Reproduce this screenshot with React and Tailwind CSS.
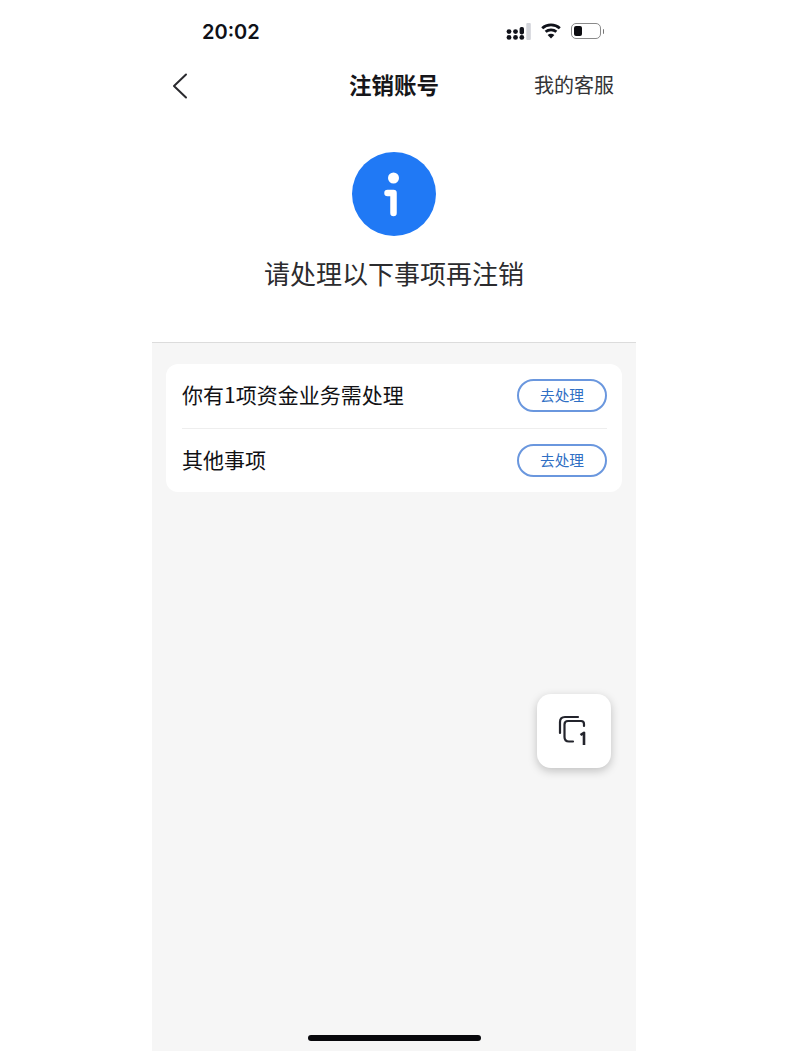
const CJK = "font-['Noto_Sans_CJK_SC','Noto_Sans',sans-serif]";

function StatusIcons() {
  return (
    <div className="flex -translate-y-px items-center gap-[10px]">
      <svg width="25" height="17" viewBox="0 0 25 17">
        <g fill="#10121a">
          <circle cx="3" cy="8.6" r="2.4" /><circle cx="3" cy="14.4" r="2.4" />
          <circle cx="9.5" cy="8.6" r="2.4" /><circle cx="9.5" cy="14.4" r="2.4" />
          <rect x="13.6" y="4" width="4.4" height="7.4" rx="1.8" /><circle cx="15.8" cy="14.4" r="2.4" />
        </g>
        <rect x="20.3" y="0" width="4.5" height="17" rx="1" fill="#d2d4da" />
      </svg>
      <svg width="20" height="16" viewBox="0 0 20 16" fill="none" stroke="#10121a" strokeWidth="2.8">
        <path d="M1.2 5.2 C6 0.8 14 0.8 18.8 5.2" />
        <path d="M4.6 8.8 C7.6 6.2 12.4 6.2 15.4 8.8" />
        <path d="M10 15.6 L6.6 11.9 C8.6 10.4 11.4 10.4 13.4 11.9 Z" fill="#10121a" stroke="none" />
      </svg>
      <div className="flex items-center gap-[1.5px]">
        <div className="flex h-[16px] w-[30px] items-center rounded-[5px] border border-[#8a8a8a] p-[2px]">
          <div className="h-full w-[8px] rounded-[2px] bg-[#0c0c10]" />
        </div>
        <div className="h-[5px] w-[1.5px] rounded-r bg-[#777]" />
      </div>
    </div>
  );
}

function Button() {
  return (
    <button className="flex h-[33px] w-[90px] items-center justify-center rounded-full border-2 border-[#6a97de] bg-white text-[14.7px] text-[#2f6fc4]">
      去处理
    </button>
  );
}

export default function App() {
  const label = "pb-[2px] text-[21px] leading-none text-[#111114]";
  return (
    <div className={`flex min-h-[1051px] justify-center bg-white ${CJK}`}>
      <div className="relative flex h-[1051px] w-[484px] flex-col overflow-hidden">
        <div className="flex h-[64px] shrink-0 items-center justify-between pl-[50px] pr-[32px]">
          <span className="font-['Inter',sans-serif] text-[20px] font-semibold leading-none text-[#0f1118]">20:02</span>
          <StatusIcons />
        </div>

        <div className="relative flex h-[44px] shrink-0 items-center justify-center">
          <svg className="absolute left-[20px] top-[9px]" width="16" height="26" viewBox="0 0 16 26" fill="none" stroke="#2a2a2e" strokeWidth="2" strokeLinecap="round" strokeLinejoin="round">
            <path d="M14 1.5 L2 13 L14 24.5" />
          </svg>
          <span className="pb-[3px] text-[22.5px] font-bold leading-none text-[#16161a]">注销账号</span>
          <span className="absolute right-[22px] pb-[2px] text-[20px] leading-none text-[#333336]">我的客服</span>
        </div>

        <div className="flex h-[235px] shrink-0 flex-col items-center border-b border-[#dcdcdc] pt-[44px]">
          <div className="h-[84px] w-[84px] rounded-full bg-[#2079f5]">
            <svg width="84" height="84" viewBox="0 0 84 84">
              <circle cx="41.5" cy="26" r="5.5" fill="white" />
              <path d="M35.5 41 H41.5 V61" fill="none" stroke="white" strokeWidth="6.5" strokeLinecap="round" strokeLinejoin="round" />
            </svg>
          </div>
          <div className="mt-[21px] text-[26px] leading-[32px] text-[#2b2b2e]">请处理以下事项再注销</div>
        </div>

        <div className="flex-1 bg-[#f6f6f6] px-[14px] pt-[21px]">
          <div className="w-[456px] rounded-[12px] bg-white pl-[16px] pr-[15px]">
            <div className="flex h-[64px] items-center justify-between pb-[2px]">
              <span className={label}>你有1项资金业务需处理</span>
              <Button />
            </div>
            <div className="h-px bg-[#eeeeee]" />
            <div className="flex h-[63px] items-center justify-between pb-px">
              <span className={label}>其他事项</span>
              <Button />
            </div>
          </div>
        </div>

        <div className="absolute left-[385px] top-[694px] flex h-[74px] w-[74px] items-center justify-center rounded-[14px] bg-white shadow-[0_3px_10px_rgba(0,0,0,0.22)]">
          <svg width="34" height="34" viewBox="0 0 34 34" fill="none" stroke="#23242c" strokeWidth="2.2" strokeLinecap="round" strokeLinejoin="round">
            <path d="M21 3 H8 Q3 3 3 8 V19" />
            <path d="M27 12 V10 Q27 7 24 7 H11 Q7.5 7 7.5 10.5 V23 Q7.5 27.5 12 27.5 H16" />
            <path d="M23.5 21 L27 18.8 V31" strokeWidth="2.6" strokeLinecap="butt" />
          </svg>
        </div>

        <div className="absolute bottom-[10px] left-[156px] h-[6px] w-[173px] rounded-full bg-[#08080c]" />
      </div>
    </div>
  );
}
